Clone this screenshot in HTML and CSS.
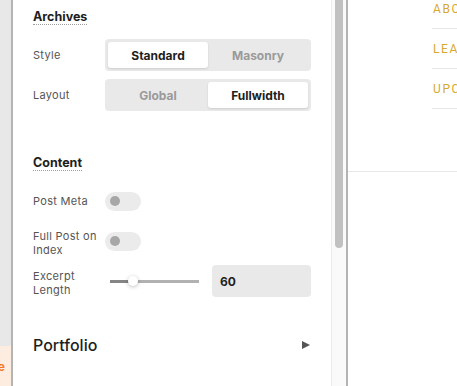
FILE: index.html
```html
<!DOCTYPE html>
<html lang="en">
<head>
    <meta charset="UTF-8">
    <title>Customizer</title>
    <link rel="stylesheet" href="styles.css">
</head>
<body>
    <!-- Left edge of the customizer -->
    <div class="strip">
        <div class="strip-fill"></div>
        <div class="strip-note"><span>Update</span></div>
    </div>

    <!-- Settings panel -->
    <div class="panel">
        <div class="section archives">
            <h3>Archives</h3>
            <div class="row">
                <label>Style</label>
                <div class="segment">
                    <span class="active">Standard</span>
                    <span>Masonry</span>
                </div>
            </div>
            <div class="row">
                <label>Layout</label>
                <div class="segment">
                    <span>Global</span>
                    <span class="active">Fullwidth</span>
                </div>
            </div>
        </div>

        <div class="section content">
            <h3>Content</h3>
            <div class="row">
                <label>Post Meta</label>
                <div class="toggle"><i></i></div>
            </div>
            <div class="row">
                <label class="two-line">Full Post on<br>Index</label>
                <div class="toggle"><i></i></div>
            </div>
            <div class="row">
                <label class="two-line">Excerpt<br>Length</label>
                <div class="range">
                    <div class="track">
                        <div class="fill"></div>
                        <div class="knob"></div>
                    </div>
                    <input class="number" type="text" value="60">
                </div>
            </div>
        </div>

        <div class="section portfolio">
            <h2>Portfolio</h2>
            <span class="arrow"></span>
        </div>
    </div>

    <!-- Panel scrollbar -->
    <div class="scroll">
        <div class="thumb"></div>
    </div>

    <!-- Site preview -->
    <div class="preview">
        <div class="site-header">
            <ul class="menu">
                <li>ABOUT</li>
                <li>LEARN</li>
                <li>UPCOMING</li>
            </ul>
        </div>
    </div>
</body>
</html>
```

FILE: styles.css
```css
body {
    margin: 0;
    height: 386px;
    display: flex;
    overflow: hidden;
    font-family: 'Inter', 'Roboto', sans-serif;
    color: #222;
    background: #fff;
}

.strip {
    width: 11px;
    flex-shrink: 0;
    display: flex;
    flex-direction: column;
    background: #e8e8e8;
    border-right: 2px solid #b4b4b4;
}

.strip-fill {
    height: 346px;
}

.strip-note {
    flex: 1;
    display: flex;
    justify-content: flex-end;
    align-items: center;
    padding-right: 6px;
    overflow: hidden;
    background: #fdede1;
    color: #f37b1d;
    font-size: 12px;
    font-weight: 700;
    white-space: nowrap;
}

.panel {
    width: 278px;
    flex-shrink: 0;
    padding: 0 20px;
    background: #fff;
}

.section h3 {
    width: fit-content;
    margin: 0;
    font-size: 12.5px;
    font-weight: 700;
    line-height: 14px;
    color: #1e1e1e;
    border-bottom: 1px dotted #a0a0a0;
}

.archives {
    padding-top: 10px;
}

.archives h3 {
    margin-bottom: 14px;
}

.content {
    margin-top: 45px;
}

.content h3 {
    margin-bottom: 14px;
}

.row {
    display: flex;
    align-items: center;
    height: 32px;
    margin-bottom: 8px;
}

.row label {
    width: 72px;
    flex-shrink: 0;
    font-size: 11px;
    line-height: 14px;
    color: #555;
    letter-spacing: 0.3px;
}

.row .two-line {
    line-height: 14.5px;
    padding-top: 4px;
}

.segment {
    flex: 1;
    display: flex;
    height: 32px;
    padding: 3px;
    box-sizing: border-box;
    background: #e9e9e9;
    border-radius: 4px;
}

.segment span {
    flex: 1;
    display: flex;
    align-items: center;
    justify-content: center;
    font-size: 12px;
    font-weight: 700;
    color: #9a9a9a;
    border-radius: 3px;
}

.segment .active {
    background: #fff;
    color: #1e1e1e;
    box-shadow: 0 1px 2px rgba(0, 0, 0, 0.12);
}

.toggle {
    width: 36px;
    height: 19px;
    display: flex;
    align-items: center;
    padding-left: 5px;
    box-sizing: border-box;
    background: #ebebeb;
    border-radius: 10px;
}

.toggle i {
    width: 10px;
    height: 10px;
    border-radius: 50%;
    background: #a7a7a7;
}

.range {
    flex: 1;
    display: flex;
    align-items: center;
    gap: 13px;
}

.track {
    width: 89px;
    height: 3px;
    margin-left: 5px;
    display: flex;
    align-items: center;
    background: #b1b1b1;
}

.fill {
    width: 23px;
    height: 3px;
    background: #858585;
}

.knob {
    width: 10px;
    height: 10px;
    margin-left: -5px;
    border-radius: 50%;
    background: #fff;
    box-shadow: 0 1px 4px rgba(0, 0, 0, 0.25);
}

.number {
    width: 99px;
    height: 32px;
    padding: 0 8px;
    box-sizing: border-box;
    border: none;
    border-radius: 4px;
    background: #e9e9e9;
    font-family: inherit;
    font-size: 12px;
    font-weight: 700;
    color: #1e1e1e;
}

.portfolio {
    margin-top: 38px;
    display: flex;
    align-items: center;
    justify-content: space-between;
}

.portfolio h2 {
    margin: 0;
    font-size: 16px;
    font-weight: 500;
    line-height: 20px;
    color: #1e1e1e;
}

.arrow {
    width: 0;
    height: 0;
    margin-right: 1px;
    border-top: 4.5px solid transparent;
    border-bottom: 4.5px solid transparent;
    border-left: 8px solid #555;
}

.scroll {
    width: 14px;
    flex-shrink: 0;
    background: #fafafa;
    border-left: 1px solid #ececec;
    border-right: 2px solid #b4b4b4;
}

.thumb {
    width: 8px;
    height: 248px;
    margin-left: 3px;
    border-radius: 0 0 4px 4px;
    background: #c1c1c1;
}

.preview {
    flex: 1;
    background: #fff;
}

.site-header {
    height: 171px;
    border-bottom: 1px solid #e8e8e8;
    overflow: hidden;
}

.menu {
    list-style: none;
    margin: -11px 0 0 84px;
    padding: 0;
}

.menu li {
    height: 39px;
    display: flex;
    align-items: center;
    padding-left: 1px;
    border-bottom: 1px solid #e6e6e6;
    font-family: 'Roboto', sans-serif;
    font-size: 12px;
    letter-spacing: 1.6px;
    color: #d8a830;
    white-space: nowrap;
}
```
